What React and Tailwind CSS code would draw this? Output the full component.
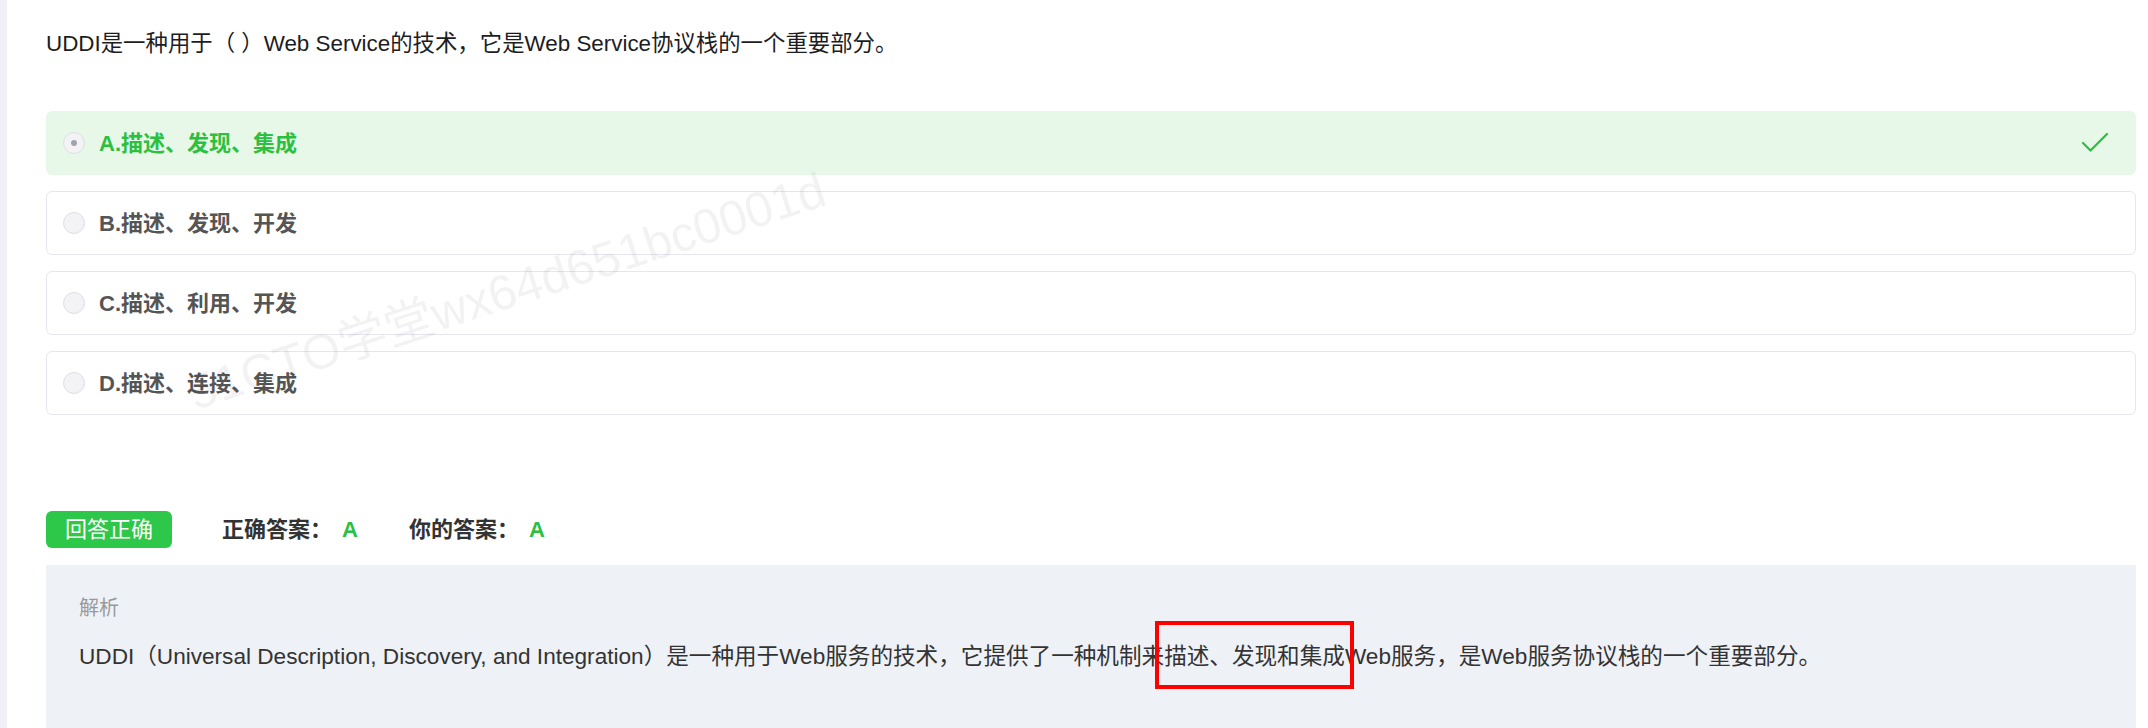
import { Check } from 'lucide-react';

const FONT = { fontFamily: '"Liberation Sans", "Noto Sans CJK SC", sans-serif' };

const options = [
  { key: 'A', text: '描述、发现、集成', correct: true },
  { key: 'B', text: '描述、发现、开发' },
  { key: 'C', text: '描述、利用、开发' },
  { key: 'D', text: '描述、连接、集成' },
];

const Radio = ({ checked }) => (
  <span className="w-[22px] h-[22px] rounded-full border border-[#dedfe8] bg-[#f3f3f6] flex items-center justify-center shrink-0">
    {checked && <span className="w-[6px] h-[6px] rounded-full bg-[#a3a3ad]" />}
  </span>
);

const Option = ({ item }) => {
  if (item.correct) {
    return (
      <div className="h-[64px] rounded-[6px] bg-[#e7f8e8] flex items-center pl-[17px] pr-[23px]">
        <Radio checked />
        <span className="ml-[14px] flex-1 text-[22px] font-semibold text-[#2bc03f]">
          {item.key}.{item.text}
        </span>
        <Check className="w-[36px] h-[36px] text-[#2bc03f]" strokeWidth={1.5} />
      </div>
    );
  }
  return (
    <div className="h-[64px] rounded-[6px] border border-[#e7e6f0] flex items-center pl-[16px]">
      <Radio />
      <span className="ml-[14px] text-[22px] font-semibold text-[#555555]">
        {item.key}.{item.text}
      </span>
    </div>
  );
};

export default function App() {
  return (
    <div className="relative flex h-[728px] overflow-hidden bg-white" style={FONT}>
      <div className="w-[7px] shrink-0 bg-[#eff1f6]" />

      <div className="flex-1 pl-[39px] pr-[12px] pt-[29px]">
        <p className="text-[22.4px] leading-[30px] text-[#1d1d1f]">
          UDDI是一种用于（ ）Web Service的技术，它是Web Service协议栈的一个重要部分。
        </p>

        <div className="mt-[52px] flex flex-col gap-4">
          {options.map((o) => (
            <Option key={o.key} item={o} />
          ))}
        </div>

        <div className="mt-[96px] flex items-center">
          <span className="h-[37px] px-[19px] rounded-[6px] bg-[#2dc84a] text-white text-[22px] flex items-center">
            回答正确
          </span>
          <span className="ml-[50px] text-[22px] font-semibold text-[#333333]">
            正确答案：<span className="ml-[10px] text-[#2bc03f]">A</span>
          </span>
          <span className="ml-[51px] text-[22px] font-semibold text-[#333333]">
            你的答案：<span className="ml-[10px] text-[#2bc03f]">A</span>
          </span>
        </div>

        <div className="mt-[17px] bg-[#eef1f6] pl-[33px] pt-[29px] pb-[60px]">
          <div className="text-[20px] leading-[28px] text-[#999999]">解析</div>
          <p className="mt-[20px] text-[22.6px] leading-[30px] text-[#333333]">
            UDDI（Universal Description, Discovery, and Integration）是一种用于Web服务的技术，它提供了一种机制来
            <span className="relative">
              描述、发现和集成
              <span className="absolute -left-[9px] -right-[9px] -top-[23px] -bottom-[20px] border-4 border-[#ff0000]" />
            </span>
            Web服务，是Web服务协议栈的一个重要部分。
          </p>
        </div>
      </div>

      {/* watermark */}
      <div className="pointer-events-none absolute left-[190px] top-[358px] -rotate-[18deg] origin-left text-[49px] text-black/[0.05] whitespace-nowrap">
        51CTO学堂wx64d651bc0001d
      </div>
    </div>
  );
}
